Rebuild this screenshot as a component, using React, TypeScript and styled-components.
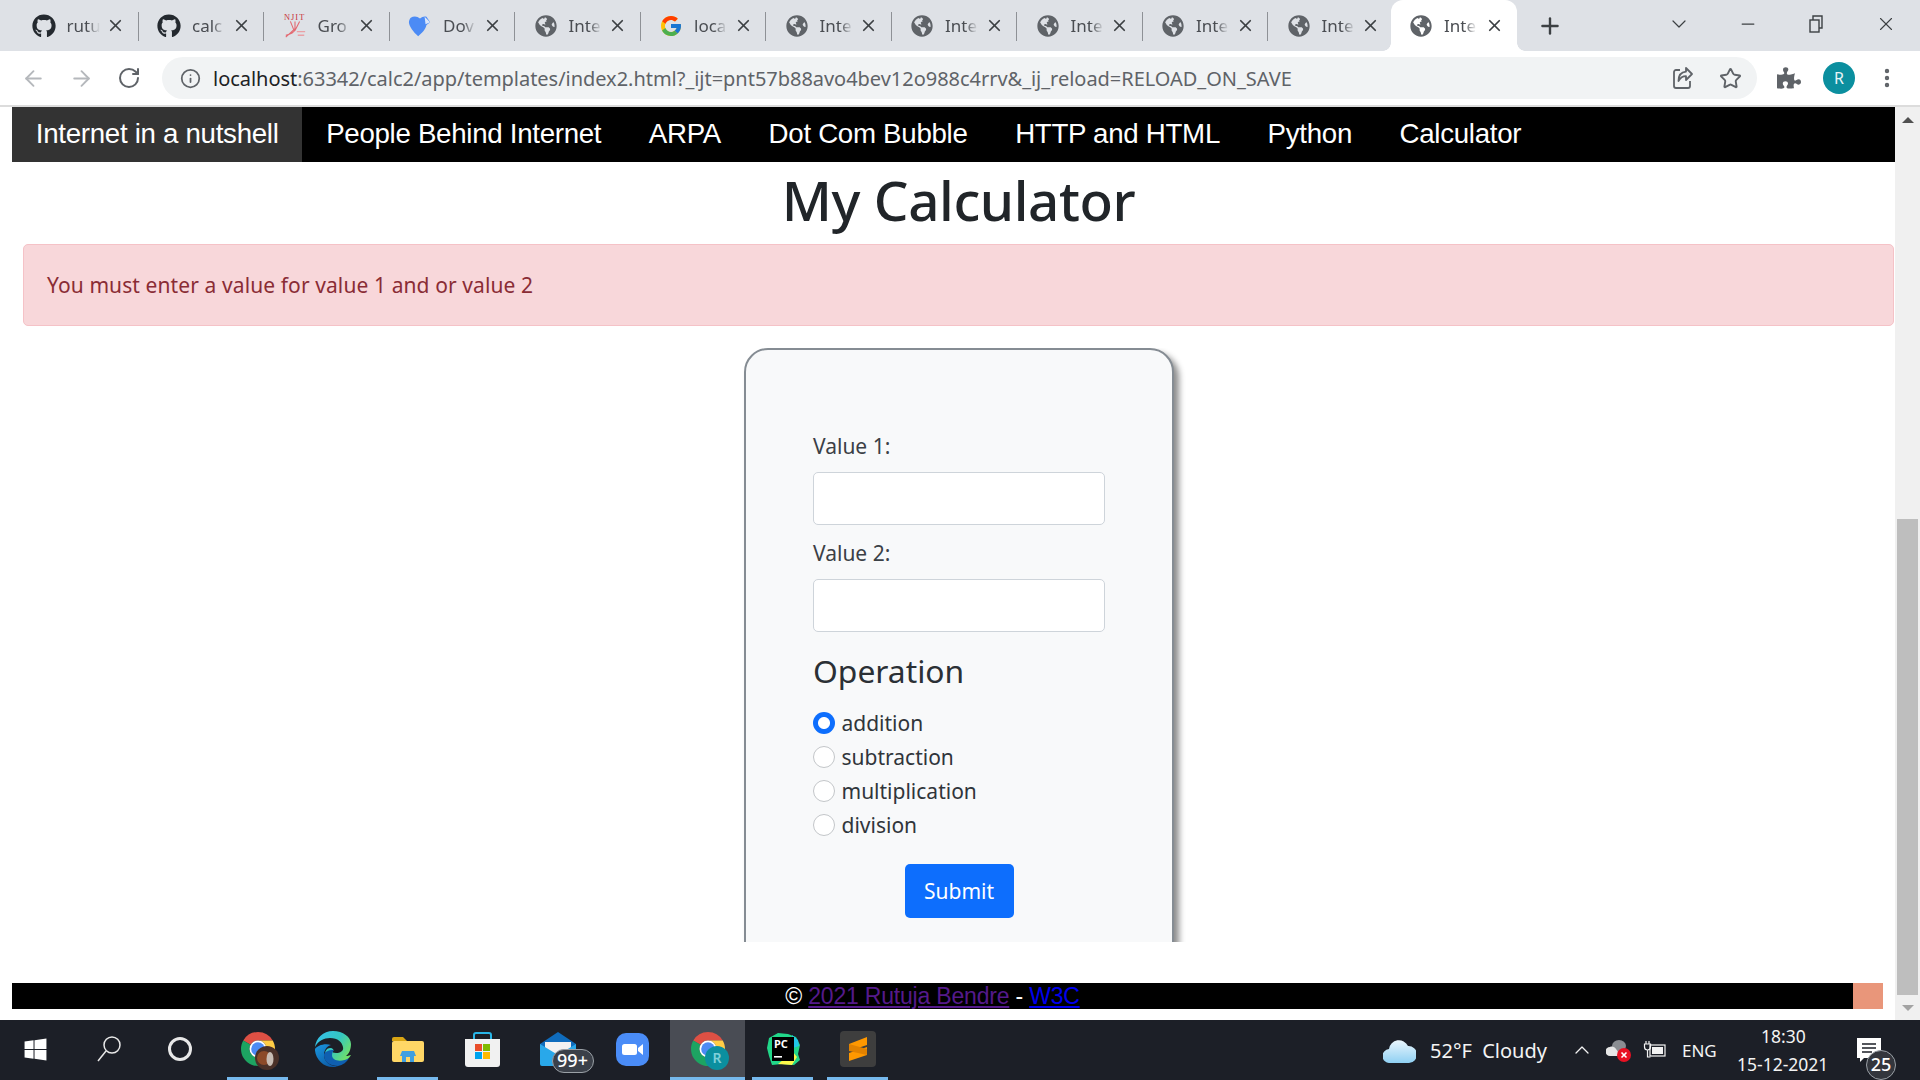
import React from "react";
import styled, { createGlobalStyle, css } from "styled-components";
import { ArrowLeft, ArrowRight, RotateCw, Info, Star, EllipsisVertical, ChevronDown, Minus, X, Plus, ChevronUp } from "lucide-react";
import { FaGithub, FaGlobeAmericas, FaPuzzlePiece, FaWindows } from "react-icons/fa";
import { FcGoogle } from "react-icons/fc";

const GlobalStyle = createGlobalStyle`
  html, body {
    margin: 0;
    padding: 0;
    height: 100%;
    overflow: hidden;
    background: #fff;
  }
  * {
    box-sizing: border-box;
  }
`;

const uiFont = `"Noto Sans", "Open Sans", sans-serif`;

const Page = styled.div`
  width: 1920px;
  height: 1080px;
  display: flex;
  flex-direction: column;
  font-family: ${uiFont};
`;

/* browser chrome */
const TabStrip = styled.div`
  height: 51px;
  background: #dee1e6;
  display: flex;
  align-items: stretch;
  padding-left: 13px;
  flex-shrink: 0;
`;

const activeTab = css`
  margin-left: -3px;
  width: 126.5px;
  background: #fff;
  border-radius: 12px 12px 0 0;

  &::before,
  &::after {
    content: "";
    position: absolute;
    bottom: 0;
    width: 8px;
    height: 8px;
  }
  &::before {
    left: -8px;
    background: radial-gradient(circle at 0 0, #dee1e6 7.5px, #fff 8px);
  }
  &::after {
    right: -8px;
    background: radial-gradient(circle at 100% 0, #dee1e6 7.5px, #fff 8px);
  }
`;

const idleTab = css`
  &::after {
    content: "";
    position: absolute;
    right: 0;
    top: 12px;
    height: 29px;
    width: 1px;
    background: #8e9196;
  }
`;

const Tab = styled.div<{ $active?: boolean }>`
  position: relative;
  width: 125.5px;
  display: flex;
  align-items: center;
  padding: 0 13.5px 0 18.5px;
  color: #45484d;
  ${(p) => (p.$active ? activeTab : idleTab)}
`;

const FavSlot = styled.span`
  width: 24px;
  height: 24px;
  display: flex;
  align-items: center;
  justify-content: center;
  flex-shrink: 0;
  color: #5f6368;
`;

const TabTitle = styled.span`
  margin-left: 11px;
  width: 33px;
  overflow: hidden;
  white-space: nowrap;
  font-size: 17px;
  color: #4a4d52;
  -webkit-mask-image: linear-gradient(90deg, #000 60%, transparent 100%);
  mask-image: linear-gradient(90deg, #000 60%, transparent 100%);
`;

const TabClose = styled.span`
  margin-left: auto;
  display: flex;
  color: #3c4043;
`;

const NewTab = styled.div`
  width: 66px;
  display: flex;
  align-items: center;
  justify-content: center;
  color: #3c4043;
`;

const WindowControls = styled.div`
  margin-left: auto;
  display: flex;
  align-items: center;
  color: #3c4043;
`;

const WinButton = styled.span<{ $w: number }>`
  width: ${(p) => p.$w}px;
  display: flex;
  justify-content: center;
  margin-bottom: 4px;
`;

const Toolbar = styled.div`
  height: 56px;
  background: #fff;
  border-bottom: 2px solid #dcdcdc;
  display: flex;
  align-items: center;
  padding-left: 5px;
  flex-shrink: 0;
`;

const NavIcon = styled.span<{ $w: number; $color?: string }>`
  width: ${(p) => p.$w}px;
  display: flex;
  justify-content: center;
  color: ${(p) => p.$color || "#5f6368"};
  flex-shrink: 0;
`;

const Omnibox = styled.div`
  width: 1595px;
  height: 42px;
  margin-left: 4px;
  border-radius: 21px;
  background: #f1f3f4;
  display: flex;
  align-items: center;
  padding-left: 17px;
  flex-shrink: 0;
`;

const UrlText = styled.span`
  margin-left: 12px;
  font-size: 20px;
  letter-spacing: -0.03px;
  color: #5f6368;
  white-space: nowrap;
  flex: 1;

  b {
    font-weight: 400;
    color: #202124;
  }
`;

const Avatar = styled.span`
  width: 32px;
  height: 32px;
  border-radius: 50%;
  background: #0b8f9f;
  color: #e8f4f6;
  display: flex;
  align-items: center;
  justify-content: center;
  font-size: 16px;
`;

/* page content */
const Viewport = styled.div`
  flex: 1;
  display: flex;
  min-height: 0;
`;

const Main = styled.div`
  width: 1895px;
  display: flex;
  flex-direction: column;
`;

const TopNav = styled.nav`
  margin-left: 12px;
  height: 55px;
  background: #000;
  display: flex;
  font-family: "Liberation Sans", Arial, sans-serif;
  flex-shrink: 0;
`;

const NavLink = styled.a<{ $active?: boolean }>`
  display: flex;
  align-items: center;
  padding: 0 23.8px 2px;
  font-size: 27.7px;
  letter-spacing: -0.3px;
  color: #fff;
  background: ${(p) => (p.$active ? "#333" : "transparent")};
  white-space: nowrap;
`;

const Container = styled.div`
  padding: 0 1px 0 23px;
  display: flex;
  flex-direction: column;
`;

const Title = styled.h1`
  margin: 0;
  height: 82px;
  padding-bottom: 7px;
  display: flex;
  align-items: center;
  justify-content: center;
  font-size: 54.7px;
  font-weight: 500;
  letter-spacing: -0.4px;
  color: #212529;
`;

const Alert = styled.div`
  height: 82px;
  background: #f8d7da;
  border: 1px solid #f5c2c7;
  border-radius: 5px;
  color: #8a2c35;
  font-size: 21px;
  letter-spacing: 0.1px;
  display: flex;
  align-items: center;
  padding-left: 23px;
`;

const CardClip = styled.div`
  margin-top: 22px;
  height: 594px;
  overflow: hidden;
  display: flex;
  justify-content: center;
`;

const Card = styled.form`
  width: 430px;
  height: 700px;
  background: #f8f9fa;
  border: 2px solid #858c93;
  border-radius: 24px;
  box-shadow: 5px 5px 6px rgba(0, 0, 0, 0.45);
  padding: 81px 66.5px 0 67.5px;
  color: #343a40;
`;

const FieldLabel = styled.label`
  display: block;
  height: 30px;
  line-height: 30px;
  font-size: 21px;
  margin-bottom: 11px;
  color: #3b4046;
`;

const TextField = styled.input`
  display: block;
  width: 100%;
  height: 53px;
  margin-bottom: 13px;
  border: 1.5px solid #ced4da;
  border-radius: 5px;
  background: #fff;
  outline: none;
`;

const Legend = styled.div`
  margin-top: 21px;
  height: 36px;
  line-height: 36px;
  font-size: 31.8px;
  color: #2b3035;
`;

const RadioGroup = styled.div`
  margin-top: 17px;
  display: flex;
  flex-direction: column;
`;

const RadioRow = styled.label`
  height: 34px;
  display: flex;
  align-items: center;
  gap: 6.5px;
  font-size: 21px;
  color: #30353a;
`;

const Radio = styled.input`
  appearance: none;
  margin: 0;
  width: 22px;
  height: 22px;
  border-radius: 50%;
  border: 1.5px solid #c3c6c9;
  background: #fff;

  &:checked {
    border: none;
    background: radial-gradient(circle, #fff 0 5.5px, #0d6efd 6.5px);
  }
`;

const SubmitRow = styled.div`
  margin-top: 22px;
  display: flex;
  justify-content: center;
`;

const SubmitButton = styled.button`
  width: 109px;
  height: 54px;
  border: none;
  border-radius: 5px;
  background: #0d6efd;
  color: #fff;
  font-family: ${uiFont};
  font-size: 21px;
`;

const Footer = styled.footer`
  margin: 41px 12px 0 12px;
  height: 26px;
  display: flex;
  font-family: "Liberation Sans", Arial, sans-serif;
`;

const FooterBar = styled.div`
  flex: 1;
  background: #000;
  color: #fff;
  font-size: 23px;
  letter-spacing: -0.2px;
  line-height: 26px;
  text-align: center;
`;

const FooterLink = styled.a<{ $visited?: boolean }>`
  color: ${(p) => (p.$visited ? "#551a8b" : "#0000ee")};
  text-decoration: underline;
`;

const FooterSwatch = styled.div`
  width: 30px;
  background: #e9967a;
`;

const Scrollbar = styled.div`
  width: 25px;
  background: #f0f0f0;
  display: flex;
  flex-direction: column;
  align-items: center;
`;

const ScrollArrow = styled.div<{ $down?: boolean }>`
  height: 25px;
  flex-shrink: 0;
  display: flex;
  align-items: center;
  justify-content: center;

  &::before {
    content: "";
    width: 0;
    height: 0;
    border-left: 6px solid transparent;
    border-right: 6px solid transparent;
    ${(p) => (p.$down ? "border-top: 6px solid #a3a3a3;" : "border-bottom: 6px solid #505050;")}
  }
`;

const ScrollTrack = styled.div`
  flex: 1;
  display: flex;
  align-items: flex-end;
`;

const ScrollThumb = styled.div`
  width: 21px;
  height: 476px;
  background: #bebebe;
`;

/* windows taskbar */
const Taskbar = styled.div`
  height: 60px;
  background: #1c1f27;
  display: flex;
  align-items: stretch;
  flex-shrink: 0;
  color: #fff;
`;

const TaskSlot = styled.div<{ $w?: number; $open?: boolean; $active?: boolean }>`
  position: relative;
  width: ${(p) => p.$w || 75}px;
  display: flex;
  align-items: center;
  justify-content: center;
  padding-bottom: 2px;
  background: ${(p) => (p.$active ? "#494c54" : "transparent")};

  &::after {
    content: "";
    display: ${(p) => (p.$open ? "block" : "none")};
    position: absolute;
    bottom: 0;
    left: ${(p) => (p.$active ? "0" : "7px")};
    right: ${(p) => (p.$active ? "0" : "7px")};
    height: 3px;
    background: #76b9ed;
  }
`;

const IconStack = styled.span`
  position: relative;
  display: flex;
`;

const Cortana = styled.span`
  width: 24px;
  height: 24px;
  border-radius: 50%;
  border: 3.5px solid #e8e8e8;
`;

const MailBadge = styled.span`
  position: absolute;
  left: 12px;
  top: 17px;
  width: 42px;
  height: 24px;
  border-radius: 12px;
  border: 1px solid #9aa0a6;
  background: #3b4049;
  color: #fff;
  font-size: 18px;
  line-height: 21px;
  text-align: center;
  font-weight: 500;
`;

const NotifyBadge = styled.span`
  position: absolute;
  left: 9px;
  top: 12px;
  width: 30px;
  height: 30px;
  border-radius: 50%;
  border: 1px solid #9aa0a6;
  background: #33363d;
  color: #fff;
  font-size: 18px;
  line-height: 27px;
  text-align: center;
  font-weight: 500;
`;

const Tray = styled.div`
  margin-left: auto;
  display: flex;
  align-items: center;
`;

const TrayItem = styled.span<{ $w: number }>`
  width: ${(p) => p.$w}px;
  display: flex;
  align-items: center;
  justify-content: flex-start;
  font-size: 20px;
  color: #f3f3f3;
  white-space: nowrap;
`;

const TrayEng = styled(TrayItem)`
  font-size: 17px;
`;

const Clock = styled.div<{ $w: number }>`
  width: ${(p) => p.$w}px;
  display: flex;
  flex-direction: column;
  align-items: flex-start;
  font-size: 17.5px;
  line-height: 28px;
  color: #f3f3f3;
  white-space: nowrap;
`;

const ClockTime = styled.span`
  margin-left: 24px;
`;

/* drawings */
const RestoreIcon = () => (
  <svg width="16" height="18" viewBox="0 0 16 18" fill="none" stroke="#3c4043" strokeWidth="1.4">
    <rect x="1" y="5" width="9" height="12" />
    <path d="M4 5V1h9v12h-3" />
  </svg>
);

const ShareIcon = () => (
  <svg width="22" height="24" viewBox="0 0 22 24" fill="none" stroke="#5f6368" strokeWidth="1.8">
    <path d="M8 4H4a2 2 0 0 0-2 2v14a2 2 0 0 0 2 2h12a2 2 0 0 0 2-2v-5" />
    <path d="M20 8l-6-6v3.6C9 6 6.5 9.5 6.5 15c2-3.5 4.5-4.8 7.5-4.8V14z" strokeLinejoin="round" />
  </svg>
);

const NjitIcon = () => (
  <svg width="26" height="30" viewBox="0 0 26 30">
    <text x="1" y="9" fontSize="9" fontFamily="Liberation Serif, serif" fill="#c8333c" textLength="22">NJIT</text>
    <path d="M13 10v8L3 27M8 10l4 10M18 10l-5 10M3 25c6-1 9-3 11-7" stroke="#e36a72" strokeWidth="1.2" fill="none" />
    <path d="M15 21h9M16 25h7" stroke="#e9a0a5" strokeWidth="1.4" />
  </svg>
);

const DoveIcon = () => (
  <svg width="26" height="26" viewBox="0 0 26 26">
    <path d="M3 4c3-2 7-2 10 1 2-2 5-3 7-2l4 6-4 3c-1 5-5 9-9 12C6 20 1 13 1 9c0-2 1-4 2-5z" fill="#4c8bf5" />
    <path d="M18 3l6 6-5 2z" fill="#dbe6fa" />
  </svg>
);

const ChromeIcon = ({ badge }: { badge: "photo" | "R" }) => (
  <svg width="46" height="46" viewBox="0 0 46 46">
    <g transform="translate(2.6 2.6) scale(0.85)">
      <path d="M24 4A20 20 0 0 1 41.32 14H24A10 10 0 0 0 15.34 19L6.68 14A20 20 0 0 1 24 4Z" fill="#dd5044" />
      <path d="M6.68 14A20 20 0 0 0 24 44L32.66 29A10 10 0 0 1 15.34 19Z" fill="#1da462" />
      <path d="M41.32 14A20 20 0 0 1 24 44L32.66 29A10 10 0 0 0 24 14Z" fill="#ffcd46" />
      <circle cx="24" cy="24" r="10" fill="#fff" />
      <circle cx="24" cy="24" r="8" fill="#4c8bf5" />
    </g>
    {badge === "photo" ? (
      <>
        <circle cx="32" cy="32" r="12" fill="#4a3128" />
        <circle cx="29" cy="32" r="7" fill="#8c4a28" />
        <ellipse cx="35" cy="33" rx="3.5" ry="7" fill="#c8bdb4" />
      </>
    ) : (
      <>
        <circle cx="32" cy="32" r="12" fill="#0b8f9f" />
        <text x="32" y="37" fontSize="14" fontWeight="600" textAnchor="middle" fontFamily="Noto Sans, sans-serif" fill="#7fd0da">R</text>
      </>
    )}
  </svg>
);

const EdgeIcon = () => (
  <svg width="36" height="36" viewBox="0 0 36 36">
    <defs>
      <linearGradient id="edgeA" x1="0" y1="0" x2="1" y2="0.6">
        <stop offset="0" stopColor="#35c1f1" />
        <stop offset="0.6" stopColor="#34c6c0" />
        <stop offset="1" stopColor="#6fe06a" />
      </linearGradient>
      <linearGradient id="edgeB" x1="0" y1="0" x2="0.7" y2="1">
        <stop offset="0" stopColor="#1a98e0" />
        <stop offset="1" stopColor="#0c59a4" />
      </linearGradient>
    </defs>
    <path d="M18 0C8 0 1 7 0 16c3-6 9-9 15-9 8 0 12 4 13 9 1 4-3 6-7 6-3 0-4-1-3-2 1-1 0-3-3-3-3 0-5 3-5 6 0 7 8 11 15 9 6-1 9-5 11-8-3 1-5 1-5 1 3-2 5-7 5-12C36 6 28 0 18 0z" fill="url(#edgeA)" />
    <path d="M0 16c-1 10 7 20 18 20 2 0 3 0 5-1-7 1-14-4-14-11 0-5 3-9 7-10C9 12 2 15 0 18z" fill="url(#edgeB)" />
    <path d="M9 24c0 7 6 11 14 11 5-1 9-4 11-8-6 4-17 4-17-3 0-2 1-4 2-5-6 0-10 2-10 5z" fill="#0f5fb0" />
  </svg>
);

const FolderIcon = () => (
  <svg width="32" height="27" viewBox="0 0 32 27">
    <path d="M0 3a2 2 0 0 1 2-2h9l4 4H0z" fill="#d9a514" />
    <rect x="0" y="5" width="32" height="21" rx="2" fill="#ffd766" />
    <path d="M10 26v-6h-2l2-5h12l2 5h-2v6h-4v-5h-4v5z" fill="#3f9fe0" />
  </svg>
);

const StoreIcon = () => (
  <svg width="35" height="35" viewBox="0 0 35 35">
    <path d="M9 8V3a2 2 0 0 1 2-2h13a2 2 0 0 1 2 2v5" fill="none" stroke="#29b6e8" strokeWidth="2" />
    <path d="M0 7h35v25a3 3 0 0 1-3 3H3a3 3 0 0 1-3-3z" fill="#f1f1f1" />
    <rect x="10" y="12" width="7" height="7" fill="#e94e2a" />
    <rect x="18" y="12" width="7" height="7" fill="#7fba00" />
    <rect x="10" y="20" width="7" height="7" fill="#00a4ef" />
    <rect x="18" y="20" width="7" height="7" fill="#ffb900" />
  </svg>
);

const MailIcon = () => (
  <svg width="36" height="34" viewBox="0 0 36 34">
    <path d="M0 12L18 0l18 12v20H0z" fill="#0f6cbd" />
    <path d="M5 10h26v10L18 27 5 20z" fill="#f2f2f2" />
    <path d="M0 12l18 11 18-11v20a2 2 0 0 1-2 2H2a2 2 0 0 1-2-2z" fill="#29a8ea" />
  </svg>
);

const ZoomIcon = () => (
  <svg width="33" height="33" viewBox="0 0 33 33">
    <rect width="33" height="33" rx="10" fill="#4a8cf7" />
    <rect x="6" y="11" width="15" height="11" rx="2.5" fill="#fff" />
    <path d="M22 15l5-4v11l-5-4z" fill="#fff" />
  </svg>
);

const PycharmIcon = () => (
  <svg width="34" height="34" viewBox="0 0 34 34">
    <path d="M3 6l9-5 10 1 8 3 4 8-2 9 2 6-6 5-12-1-10 1-3-9-2-8z" fill="#21d789" />
    <path d="M26 3l6 5 1 6-6 2z" fill="#21c7e8" />
    <path d="M12 32l14 1 5-8-4-5z" fill="#fcf84a" />
    <rect x="6" y="5" width="22" height="24" fill="#000" />
    <text x="8" y="16" fontSize="11" fontWeight="700" fontFamily="Noto Sans, sans-serif" fill="#fff">PC</text>
    <rect x="8" y="24" width="8" height="1.6" fill="#fff" />
  </svg>
);

const SublimeIcon = () => (
  <svg width="36" height="36" viewBox="0 0 36 36">
    <rect width="36" height="36" rx="4" fill="#3e3e3e" />
    <path d="M27 6v8L9 20v-7zM9 22v8l18-6v-8z" fill="#ff9800" />
    <path d="M9 13l18 5v6L9 20z" fill="#e28200" />
  </svg>
);

const WeatherCloud = () => (
  <svg width="33" height="25" viewBox="0 0 33 25">
    <defs>
      <linearGradient id="cloudFill" x1="0" y1="0" x2="0" y2="1">
        <stop offset="0" stopColor="#eaf6fd" />
        <stop offset="1" stopColor="#8fd0f3" />
      </linearGradient>
    </defs>
    <path d="M7 25a7 7 0 0 1-1-14 10 10 0 0 1 19-3 8.5 8.5 0 0 1 1 17z" fill="url(#cloudFill)" />
  </svg>
);

const OneDriveError = () => (
  <svg width="25" height="24" viewBox="0 0 25 24">
    <ellipse cx="13" cy="8" rx="7" ry="6" fill="#8a8d92" />
    <path d="M4 18a4.5 4.5 0 0 1 0-9c2-1 5 0 6 2l5 7z" fill="#e6e6e6" />
    <circle cx="18" cy="17" r="7" fill="#e81123" />
    <path d="M15.5 14.5l5 5m0-5l-5 5" stroke="#fff" strokeWidth="1.6" />
  </svg>
);

const BatteryIcon = () => (
  <svg width="25" height="20" viewBox="0 0 25 20" fill="none" stroke="#f3f3f3" strokeWidth="1.2">
    <path d="M4 1v3M7 1v3M2.5 4h6v3a3 3 0 0 1-6 0zM5.5 10v7h3" />
    <rect x="8" y="5" width="15" height="11" />
    <rect x="10" y="7" width="11" height="7" fill="#f3f3f3" stroke="none" />
  </svg>
);

const NotifyIcon = () => (
  <svg width="24" height="24" viewBox="0 0 24 24">
    <path d="M0 0h24v20H7l-4 4v-4H0z" fill="#fff" />
    <path d="M5 6h14M5 10h14M5 14h10" stroke="#1c1f27" strokeWidth="1.4" />
  </svg>
);

const globe = <FaGlobeAmericas size={22} />;

const tabs = [
  { icon: <FaGithub size={24} color="#24292f" />, title: "rutu" },
  { icon: <FaGithub size={24} color="#24292f" />, title: "calc" },
  { icon: <NjitIcon />, title: "Gro" },
  { icon: <DoveIcon />, title: "Dov" },
  { icon: globe, title: "Inte" },
  { icon: <FcGoogle size={24} />, title: "loca" },
  { icon: globe, title: "Inte" },
  { icon: globe, title: "Inte" },
  { icon: globe, title: "Inte" },
  { icon: globe, title: "Inte" },
  { icon: globe, title: "Inte" },
  { icon: globe, title: "Inte" },
];

const navItems = ["Internet in a nutshell", "People Behind Internet", "ARPA", "Dot Com Bubble", "HTTP and HTML", "Python", "Calculator"];
const operations = ["addition", "subtraction", "multiplication", "division"];

const App: React.FC = () => {
  return (
    <Page>
      <GlobalStyle />
      <TabStrip>
        {tabs.map((tab, i) => (
          <Tab key={i} $active={i === tabs.length - 1}>
            <FavSlot>{tab.icon}</FavSlot>
            <TabTitle>{tab.title}</TabTitle>
            <TabClose>
              <X size={19} strokeWidth={2.2} />
            </TabClose>
          </Tab>
        ))}
        <NewTab>
          <Plus size={26} strokeWidth={2.2} />
        </NewTab>
        <WindowControls>
          <WinButton $w={70}>
            <ChevronDown size={24} strokeWidth={1.2} />
          </WinButton>
          <WinButton $w={68}>
            <Minus size={20} strokeWidth={1.5} />
          </WinButton>
          <WinButton $w={70}>
            <RestoreIcon />
          </WinButton>
          <WinButton $w={68}>
            <X size={22} strokeWidth={1.2} />
          </WinButton>
        </WindowControls>
      </TabStrip>

      <Toolbar>
        <NavIcon $w={57} $color="#b5b8bc">
          <ArrowLeft size={25} strokeWidth={1.8} />
        </NavIcon>
        <NavIcon $w={38} $color="#b5b8bc">
          <ArrowRight size={25} strokeWidth={1.8} />
        </NavIcon>
        <NavIcon $w={58} $color="#5f6368">
          <RotateCw size={24} strokeWidth={2} />
        </NavIcon>
        <Omnibox>
          <NavIcon $w={22}>
            <Info size={21} strokeWidth={2} />
          </NavIcon>
          <UrlText>
            <b>localhost</b>:63342/calc2/app/templates/index2.html?_ijt=pnt57b88avo4bev12o988c4rrv&_ij_reload=RELOAD_ON_SAVE
          </UrlText>
          <NavIcon $w={48}>
            <ShareIcon />
          </NavIcon>
          <NavIcon $w={46}>
            <Star size={23} strokeWidth={2} />
          </NavIcon>
          <NavIcon $w={4} />
        </Omnibox>
        <NavIcon $w={64} $color="#5f6368">
          <FaPuzzlePiece size={24} />
        </NavIcon>
        <NavIcon $w={36}>
          <Avatar>R</Avatar>
        </NavIcon>
        <NavIcon $w={60} $color="#5f6368">
          <EllipsisVertical size={24} strokeWidth={2.4} />
        </NavIcon>
      </Toolbar>

      <Viewport>
        <Main>
          <TopNav>
            {navItems.map((item, i) => (
              <NavLink key={item} $active={i === 0}>
                {item}
              </NavLink>
            ))}
          </TopNav>
          <Container>
            <Title>My Calculator</Title>
            <Alert>You must enter a value for value 1 and or value 2</Alert>
            <CardClip>
              <Card>
                <FieldLabel>Value 1:</FieldLabel>
                <TextField type="text" />
                <FieldLabel>Value 2:</FieldLabel>
                <TextField type="text" />
                <Legend>Operation</Legend>
                <RadioGroup>
                  {operations.map((op, i) => (
                    <RadioRow key={op}>
                      <Radio type="radio" name="operation" defaultChecked={i === 0} />
                      {op}
                    </RadioRow>
                  ))}
                </RadioGroup>
                <SubmitRow>
                  <SubmitButton type="button">Submit</SubmitButton>
                </SubmitRow>
              </Card>
            </CardClip>
          </Container>
          <Footer>
            <FooterBar>
              © <FooterLink $visited>2021 Rutuja Bendre</FooterLink> - <FooterLink>W3C</FooterLink>
            </FooterBar>
            <FooterSwatch />
          </Footer>
        </Main>
        <Scrollbar>
          <ScrollArrow />
          <ScrollTrack>
            <ScrollThumb />
          </ScrollTrack>
          <ScrollArrow $down />
        </Scrollbar>
      </Viewport>

      <Taskbar>
        <TaskSlot $w={70}>
          <FaWindows size={25} color="#fff" />
        </TaskSlot>
        <TaskSlot $w={78}>
          <svg width="26" height="28" viewBox="0 0 26 28" fill="none" stroke="#e8e8e8" strokeWidth="1.5">
            <circle cx="16" cy="10" r="8" />
            <path d="M10 16L2 26" />
          </svg>
        </TaskSlot>
        <TaskSlot $w={64}>
          <Cortana />
        </TaskSlot>
        <TaskSlot $w={8} />
        <TaskSlot $open>
          <ChromeIcon badge="photo" />
        </TaskSlot>
        <TaskSlot>
          <EdgeIcon />
        </TaskSlot>
        <TaskSlot $open>
          <FolderIcon />
        </TaskSlot>
        <TaskSlot>
          <StoreIcon />
        </TaskSlot>
        <TaskSlot>
          <IconStack>
            <MailIcon />
            <MailBadge>99+</MailBadge>
          </IconStack>
        </TaskSlot>
        <TaskSlot>
          <ZoomIcon />
        </TaskSlot>
        <TaskSlot $open $active>
          <ChromeIcon badge="R" />
        </TaskSlot>
        <TaskSlot $open>
          <PycharmIcon />
        </TaskSlot>
        <TaskSlot $open>
          <SublimeIcon />
        </TaskSlot>

        <Tray>
          <TrayItem $w={47}>
            <WeatherCloud />
          </TrayItem>
          <TrayItem $w={140}>52°F&nbsp; Cloudy</TrayItem>
          <TrayItem $w={36}>
            <ChevronUp size={24} strokeWidth={1.3} />
          </TrayItem>
          <TrayItem $w={36}>
            <OneDriveError />
          </TrayItem>
          <TrayItem $w={40}>
            <BatteryIcon />
          </TrayItem>
          <TrayEng $w={55}>ENG</TrayEng>
          <Clock $w={120}>
            <ClockTime>18:30</ClockTime>
            <span>15-12-2021</span>
          </Clock>
          <TrayItem $w={63}>
            <IconStack>
              <NotifyIcon />
              <NotifyBadge>25</NotifyBadge>
            </IconStack>
          </TrayItem>
        </Tray>
      </Taskbar>
    </Page>
  );
};

export default App;
